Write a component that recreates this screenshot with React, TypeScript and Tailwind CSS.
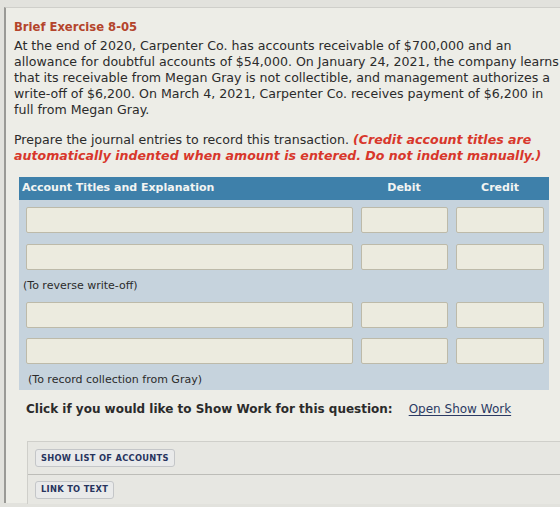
const paragraph = [
  "At the end of 2020, Carpenter Co. has accounts receivable of $700,000 and an",
  "allowance for doubtful accounts of $54,000. On January 24, 2021, the company learns",
  "that its receivable from Megan Gray is not collectible, and management authorizes a",
  "write-off of $6,200. On March 4, 2021, Carpenter Co. receives payment of $6,200 in",
  "full from Megan Gray.",
];

function EntryRow({ className = "" }: { className?: string }) {
  return (
    <div className={`flex gap-[8px] pl-[7px] ${className}`}>
      <div className="h-[26px] w-[327px] rounded-[2px] border border-[#bdbaa9] bg-[#ecebdf]" />
      <div className="h-[26px] w-[87px] rounded-[2px] border border-[#bdbaa9] bg-[#ecebdf]" />
      <div className="h-[26px] w-[88px] rounded-[2px] border border-[#bdbaa9] bg-[#ecebdf]" />
    </div>
  );
}

function SmallButton({ label }: { label: string }) {
  return (
    <div className="inline-flex h-[18px] items-center rounded-[3px] border border-[#c4c6c8] bg-[#e9eaea] px-[5px] text-[8.3px] font-bold tracking-[0.3px] text-[#27345e]">
      {label}
    </div>
  );
}

export default function App() {
  return (
    <div className="h-[507px] w-[560px] overflow-hidden bg-[#e2e2dd] pl-[4px] pt-[7px] font-['DejaVu_Sans',sans-serif] text-[#2b2b2b]">
      <div className="flex h-[496px] flex-col border-l-2 border-t border-l-[#9a9a96] border-t-[#cfcfca] bg-[#edede7] pl-[8px] pt-[10px]">
        <h1 className="text-[11.6px] font-bold leading-[18px] text-[#b4442b]">Brief Exercise 8-05</h1>

        <p className="mt-[2px] whitespace-nowrap text-[12.6px] leading-[16px]">
          {paragraph.map((line) => (
            <span key={line} className="block">
              {line}
            </span>
          ))}
        </p>

        <p className="mt-[14px] whitespace-nowrap text-[12.6px] leading-[16px]">
          <span className="block">
            Prepare the journal entries to record this transaction.{" "}
            <span className="font-bold italic text-[#d8372b]">(Credit account titles are</span>
          </span>
          <span className="block font-bold italic text-[#d8372b]">
            automatically indented when amount is entered. Do not indent manually.)
          </span>
        </p>

        <div className="ml-[5px] mt-[13px] w-[530px]">
          <div className="flex h-[23px] items-center bg-[#3e80aa] text-[11px] font-bold text-[#f2f4f2]">
            <div className="w-[338px] pl-[3px]">Account Titles and Explanation</div>
            <div className="w-[94px] text-center">Debit</div>
            <div className="w-[98px] text-center">Credit</div>
          </div>
          <div className="bg-[#c6d3dd] pt-[7px]">
            <EntryRow />
            <EntryRow className="mt-[11px]" />
            <div className="flex h-[32px] items-center pl-[4px] text-[11px]">(To reverse write-off)</div>
            <EntryRow />
            <EntryRow className="mt-[10px]" />
            <div className="flex h-[26px] items-end pb-[2px] pl-[9px] text-[11px]">(To record collection from Gray)</div>
          </div>
        </div>

        <div className="ml-[12px] mt-[10px] flex h-[18px] items-center whitespace-nowrap text-[12px]">
          <span className="font-bold">Click if you would like to Show Work for this question:</span>
          <a href="#" className="ml-[16px] text-[#2b3a63] underline underline-offset-2">
            Open Show Work
          </a>
        </div>

        <div className="ml-[13px] mt-[23px] flex flex-col border-l border-t border-[#cfcfca] bg-[#e7e7e2]">
          <div className="flex h-[33px] items-center border-b border-[#bdbdb8] pl-[7px]">
            <SmallButton label="SHOW LIST OF ACCOUNTS" />
          </div>
          <div className="flex h-[29px] items-center pl-[7px]">
            <SmallButton label="LINK TO TEXT" />
          </div>
        </div>
      </div>
    </div>
  );
}
